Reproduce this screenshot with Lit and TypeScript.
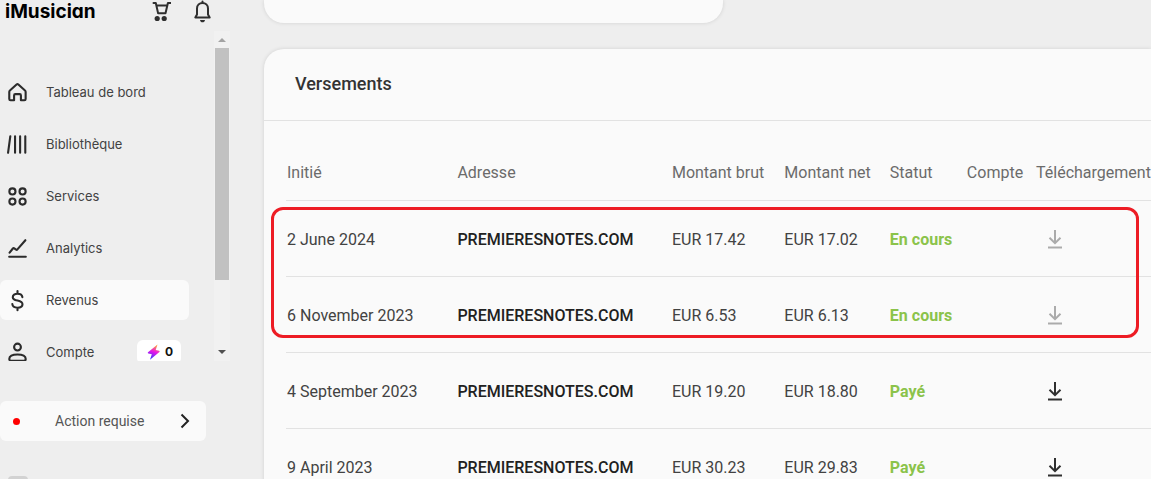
import { LitElement, html, css, svg } from "lit";
import { customElement, property } from "lit/decorators.js";
import { classMap } from "lit/directives/class-map.js";

interface Payout {
  date: string;
  address: string;
  gross: string;
  net: string;
  status: string;
  ready: boolean;
}

const payouts: Payout[] = [
  { date: "2 June 2024", address: "PREMIERESNOTES.COM", gross: "EUR 17.42", net: "EUR 17.02", status: "En cours", ready: false },
  { date: "6 November 2023", address: "PREMIERESNOTES.COM", gross: "EUR 6.53", net: "EUR 6.13", status: "En cours", ready: false },
  { date: "4 September 2023", address: "PREMIERESNOTES.COM", gross: "EUR 19.20", net: "EUR 18.80", status: "Payé", ready: true },
  { date: "9 April 2023", address: "PREMIERESNOTES.COM", gross: "EUR 30.23", net: "EUR 29.83", status: "Payé", ready: true },
];

const icons = {
  home: svg`<path d="M3.300 9.700 10.900 2.900c.6-.5 1.500-.5 2.100 0l7.600 6.800c.5.4.7 1 .7 1.600v8.100c0 .9-.6 1.500-1.500 1.500h-3.900v-5.600c0-.8-.6-1.400-1.400-1.400H9.500c-.8 0-1.400.6-1.400 1.400v5.600H4.100c-.9 0-1.500-.6-1.500-1.500v-8.100c0-.6.2-1.200.7-1.600Z"/>`,
  library: svg`<path d="M3.800 2.500 1.200 21.500M9.200 2.500v19M15 2.500v19M20.900 2.500v19"/>`,
  services: svg`<circle cx="6.200" cy="6.200" r="3.500"/><circle cx="17.800" cy="6.200" r="3.500"/><circle cx="6.200" cy="17.800" r="3.500"/><circle cx="17.800" cy="17.800" r="3.500"/>`,
  analytics: svg`<path d="M2.500 21.500h19M3 16.700l3.700-4.700c.5-.6 1.200-.6 1.700-.2l1.900 1.400c.5.4 1.200.3 1.600-.2L21 2.500"/>`,
  dollar: svg`<path d="M17.600 8.200c-.3-2.300-2.500-3.900-5.600-3.900-3.200 0-5.400 1.500-5.400 3.900 0 2.500 2.300 3.200 5.400 3.900s5.700 1.600 5.700 4.200c0 2.400-2.400 3.900-5.700 3.900-3.400 0-5.700-1.700-5.900-4.200M12 1.200v3M12 20.200v3"/>`,
  user: svg`<circle cx="12" cy="5.800" r="3.900"/><path d="M4.800 21.500c-1.400 0-2.200-.7-2.200-2 0-3.300 3.200-5.300 9.400-5.300s9.400 2 9.400 5.300c0 1.300-.8 2-2.200 2Z"/>`,
};

type IconName = keyof typeof icons;

@customElement("nav-item")
class NavItem extends LitElement {
  @property() icon: IconName = "home";
  @property() label = "";
  @property({ type: Boolean }) active = false;
  @property() credits?: string;

  static styles = css`
    :host { display: block; }
    .item {
      display: flex;
      align-items: center;
      height: 40px;
      padding: 0 8px 0 7px;
      border-radius: 6px;
      color: #424242;
      font: 13px/20px Inter, sans-serif;
      text-decoration: none;
    }
    .active { background: #fafafa; }
    .icon {
      width: 21px;
      height: 21px;
      margin-right: 18px;
      overflow: visible;
      fill: none;
      stroke: #2b2b2b;
      stroke-width: 2.400;
      stroke-linecap: round;
      stroke-linejoin: round;
    }
    .credits {
      display: flex;
      align-items: center;
      gap: 5px;
      height: 24px;
      margin-left: auto;
      padding: 0 8px 0 10px;
      border-radius: 6px;
      background: #fff;
      color: #111;
      font-size: 12px;
      font-weight: 700;
    }
    .bolt { width: 13px; height: 16px; }
  `;

  render() {
    return html`
      <a class=${classMap({ item: true, active: this.active })} href="#" aria-current=${this.active ? "page" : "false"}>
        <svg class="icon" viewBox="0 0 24 24" aria-hidden="true">${icons[this.icon]}</svg>
        <span>${this.label}</span>
        ${this.credits
          ? html`<span class="credits">
              <svg class="bolt" viewBox="0 0 13 16" aria-hidden="true">
                <defs>
                  <linearGradient id="bolt" x1="0.700" y1="0" x2="0.400" y2="1">
                    <stop offset="0" stop-color="#ffb020" />
                    <stop offset="0.500" stop-color="#e815e8" />
                    <stop offset="1" stop-color="#2c3cff" />
                  </linearGradient>
                </defs>
                <path fill="url(#bolt)" d="M10.500.4 1 8.300c-.5.500-.2 1.100.4 1.200l3.400.7-1.800 5.500L12.400 8c.5-.5.300-1.100-.3-1.200l-3.400-.7Z" />
              </svg>
              <span>${this.credits}</span>
            </span>`
          : null}
      </a>
    `;
  }
}

@customElement("side-bar")
class SideBar extends LitElement {
  static styles = css`
    :host { display: flex; flex-direction: column; font-family: Inter, sans-serif; }
    .top {
      display: flex;
      align-items: center;
      height: 31px;
      padding: 0 50px 8px 5px;
      box-sizing: border-box;
    }
    .logo {
      margin-right: auto;
      color: #000;
      font-size: 19px;
      line-height: 24px;
      font-weight: 700;
      font-feature-settings: "cv11";
      text-decoration: none;
    }
    .tool {
      display: flex;
      padding: 0;
      border: 0;
      background: none;
    }
    .tool + .tool { margin-left: 20px; }
    .glyph {
      width: 22px;
      height: 24px;
      fill: none;
      stroke: #2f2f2f;
      stroke-width: 2;
      stroke-linejoin: round;
      stroke-linecap: round;
    }
    .solid { fill: #2f2f2f; stroke: none; }
    .scroller { display: flex; height: 330px; }
    .nav {
      flex: 1;
      display: flex;
      flex-direction: column;
      gap: 12px;
      padding: 41px 25px 0 0;
      overflow: hidden;
    }
    .bar {
      display: flex;
      flex-direction: column;
      width: 16px;
      margin-right: 33px;
      background: #f1f1f1;
    }
    .arrow { width: 16px; height: 17px; fill: #a3a3a3; }
    .down { margin-top: auto; fill: #505050; }
    .thumb { height: 232px; margin: 0 1px; background: #c1c1c1; }
    .action {
      display: flex;
      align-items: center;
      height: 40px;
      margin: 40px 57px 0 0;
      padding: 0 16px 0 13px;
      border: 0;
      border-radius: 6px;
      background: #fafafa;
      color: #555;
      font: 14px/20px Roboto, sans-serif;
    }
    .dot { width: 7px; height: 7px; margin-right: 35px; border-radius: 50%; background: #f00; }
    .chevron {
      width: 10px;
      height: 16px;
      margin-left: auto;
      fill: none;
      stroke: #222;
      stroke-width: 2;
    }
    .avatar { flex: none; width: 20px; height: 20px; margin: 35px 0 0 8px; border-radius: 4px; background: #d2d2d2; }
  `;

  render() {
    return html`
      <div class="top">
        <a class="logo" href="#">iMusician</a>
        <button class="tool" aria-label="Panier">
          <svg class="glyph" viewBox="0 0 22 24">
            <path d="M4.500 3h2.300l2.300 10.200h7.400L18.900 3h3M7.500 5.500h10.500" />
            <circle class="solid" cx="8.200" cy="18.500" r="2.600" />
            <circle class="solid" cx="15.200" cy="18.500" r="2.600" />
          </svg>
        </button>
        <button class="tool" aria-label="Notifications">
          <svg class="glyph" viewBox="0 0 22 24">
            <path d="M4.300 17.500h14.400L17 14.500V8.500c0-3.200-2.400-5.500-5.500-5.500S6 5.300 6 8.500v6ZM11.500 3V1.500" />
            <path class="solid" d="M9 19.900h5c-.2 1.400-1.200 2.400-2.500 2.400s-2.300-1-2.500-2.400Z" />
          </svg>
        </button>
      </div>
      <div class="scroller">
        <nav class="nav">
          <nav-item icon="home" label="Tableau de bord"></nav-item>
          <nav-item icon="library" label="Bibliothèque"></nav-item>
          <nav-item icon="services" label="Services"></nav-item>
          <nav-item icon="analytics" label="Analytics"></nav-item>
          <nav-item icon="dollar" label="Revenus" active></nav-item>
          <nav-item icon="user" label="Compte" credits="0"></nav-item>
        </nav>
        <div class="bar" aria-hidden="true">
          <svg class="arrow" viewBox="0 0 16 17"><path d="M4 11h8L8 7Z" /></svg>
          <div class="thumb"></div>
          <svg class="arrow down" viewBox="0 0 16 17"><path d="M4 6h8l-4 4Z" /></svg>
        </div>
      </div>
      <button class="action">
        <span class="dot"></span>
        <span>Action requise</span>
        <svg class="chevron" viewBox="0 0 10 16" aria-hidden="true"><path d="m1.500 1.500 6.500 6.500-6.500 6.500" /></svg>
      </button>
      <div class="avatar"></div>
    `;
  }
}

@customElement("payout-table")
class PayoutTable extends LitElement {
  static styles = css`
    :host { display: block; position: relative; padding: 23px 0 0 22px; }
    .table {
      width: 100%;
      border-collapse: separate;
      border-spacing: 0;
      table-layout: fixed;
      font: 16px/24px Roboto, sans-serif;
      color: #424242;
      white-space: nowrap;
    }
    .date { width: 19.700%; }
    .address { width: 24.800%; }
    .gross { width: 13%; }
    .net { width: 12.200%; }
    .status { width: 8.900%; }
    .account { width: 8%; }
    .head, .cell {
      box-sizing: border-box;
      padding: 2px 0 0 1px;
      border-bottom: 1px solid #e2e2e2;
      text-align: left;
    }
    .head { height: 57px; color: #6b6b6b; font-weight: 400; }
    .cell { height: 76px; }
    .name { color: #212121; font-weight: 500; }
    .state { color: #8bc34a; font-weight: 700; }
    .download { display: flex; margin-left: 7px; padding: 0; border: 0; background: none; color: #2f2f2f; }
    .download:disabled { color: #ababab; }
    .arrow { width: 24px; height: 24px; fill: none; stroke: currentColor; stroke-width: 2; }
    .highlight {
      position: absolute;
      top: 86px;
      left: 7px;
      right: 12px;
      height: 131px;
      box-sizing: border-box;
      border: 3px solid #ed1c24;
      border-radius: 12px;
      pointer-events: none;
    }
  `;

  render() {
    return html`
      <table class="table">
        <thead>
          <tr>
            <th class="head date" scope="col">Initié</th>
            <th class="head address" scope="col">Adresse</th>
            <th class="head gross" scope="col">Montant brut</th>
            <th class="head net" scope="col">Montant net</th>
            <th class="head status" scope="col">Statut</th>
            <th class="head account" scope="col">Compte</th>
            <th class="head" scope="col">Téléchargement</th>
          </tr>
        </thead>
        <tbody>
          ${payouts.map(
            (p) => html`<tr>
              <td class="cell">${p.date}</td>
              <td class="cell name">${p.address}</td>
              <td class="cell">${p.gross}</td>
              <td class="cell">${p.net}</td>
              <td class="cell state">${p.status}</td>
              <td class="cell"></td>
              <td class="cell">
                <button class="download" aria-label="Télécharger" ?disabled=${!p.ready}>
                  <svg class="arrow" viewBox="0 0 24 24"><path d="M12 2v13M6.500 9.800l5.500 5.400 5.500-5.400M5 19.500h14" /></svg>
                </button>
              </td>
            </tr>`
          )}
        </tbody>
      </table>
      <div class="highlight"></div>
    `;
  }
}

@customElement("app-root")
class AppRoot extends LitElement {
  static styles = css`
    :host {
      display: block;
      height: 100vh;
      box-sizing: border-box;
      padding: 0 5px 7px 0;
      overflow: hidden;
      background: #fff;
    }
    .page {
      display: grid;
      grid-template-columns: 263px minmax(0, 1fr);
      height: 100%;
      overflow: hidden;
      background: #eee;
    }
    .content { display: flex; flex-direction: column; gap: 26px; padding-left: 1px; }
    .card { background: #fafafa; box-shadow: 0 0 4px rgba(0, 0, 0, 0.12); }
    .summary { width: 51.800%; height: 23px; flex: none; border-radius: 0 0 20px 20px; }
    .payouts { flex: none; border-radius: 20px 0 0 0; }
    .title {
      margin: 0;
      padding: 23px 31px 24px;
      border-bottom: 1px solid #e2e2e2;
      color: #333;
      font: 500 18px/24px Roboto, sans-serif;
    }
  `;

  render() {
    return html`
      <div class="page">
        <side-bar></side-bar>
        <main class="content">
          <section class="card summary"></section>
          <section class="card payouts">
            <h2 class="title">Versements</h2>
            <payout-table></payout-table>
          </section>
        </main>
      </div>
    `;
  }
}
